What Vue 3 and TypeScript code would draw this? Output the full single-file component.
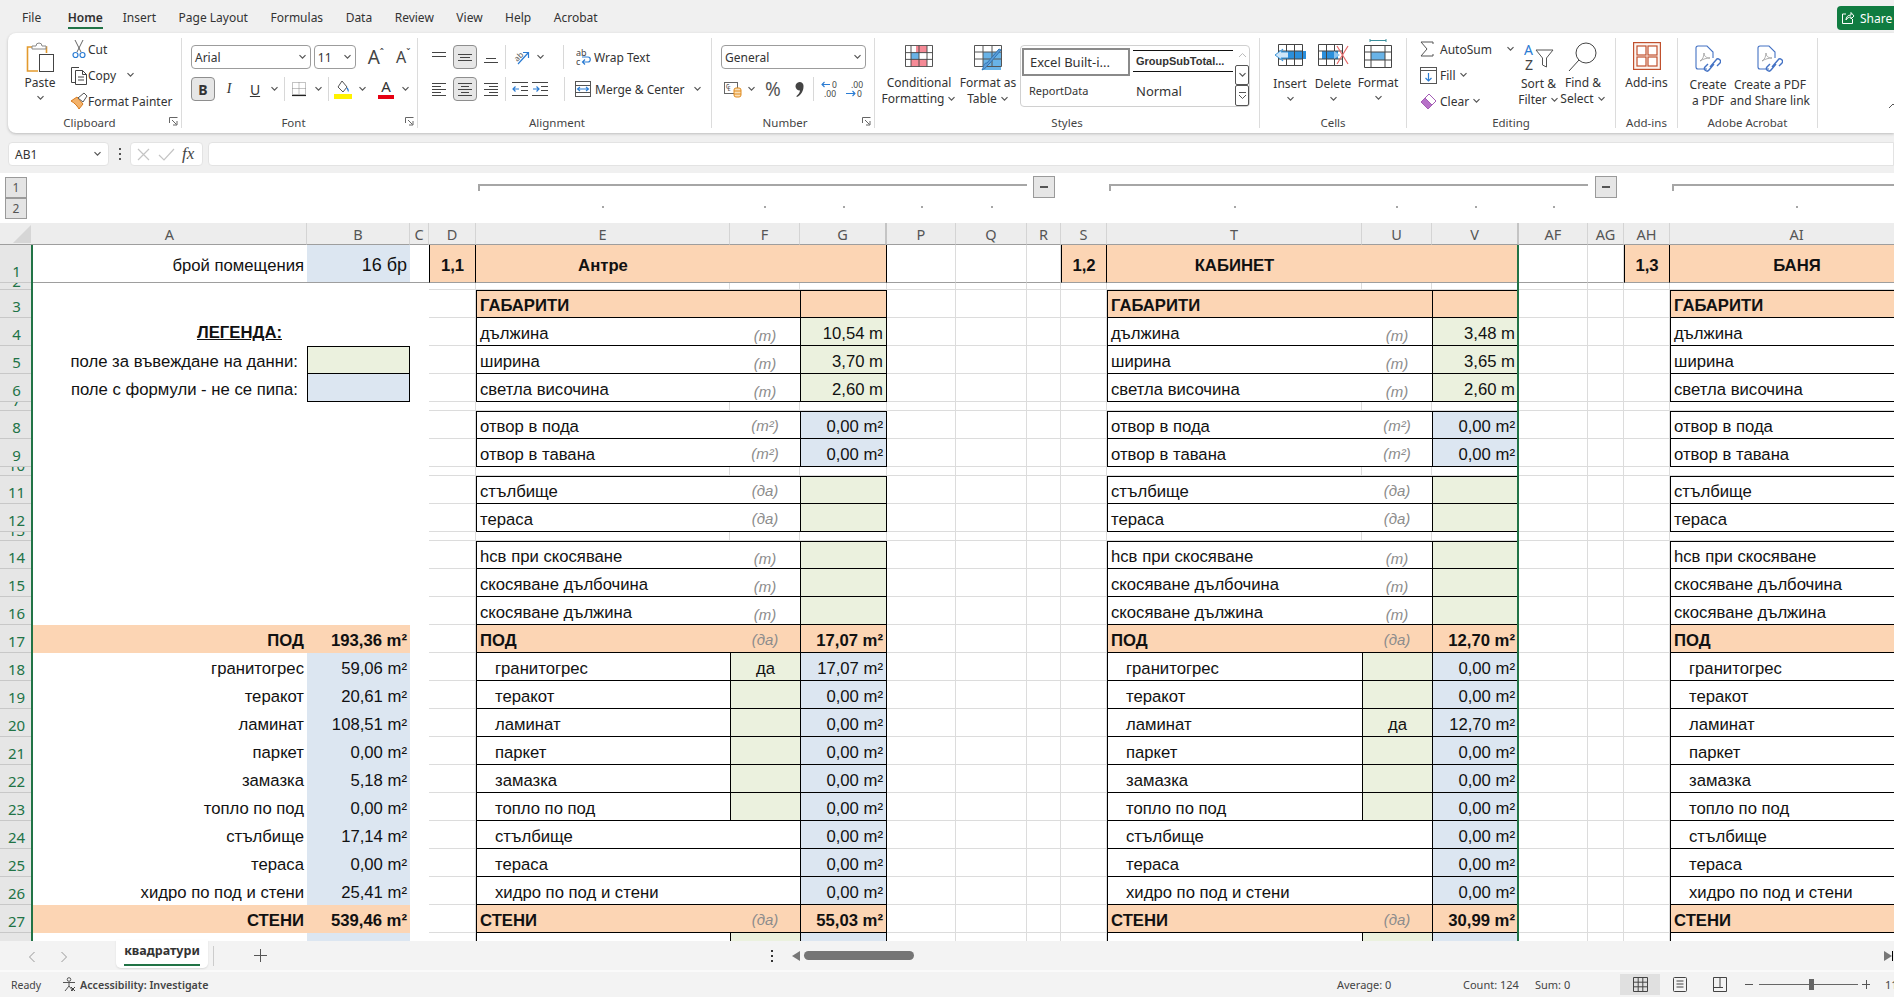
<script setup lang="ts">
import { h } from 'vue'

const Chev = () =>
  h('svg', { width: 9, height: 6, viewBox: '0 0 9 6', style: 'flex:none;display:block' }, [
    h('path', { d: 'M1.5 1.2 4.5 4.2 7.5 1.2', fill: 'none', stroke: '#555', 'stroke-width': 1.2 })
  ])

interface Cell { c: number; r: number; cls: string; t?: string; key?: string }

const colNames = ['A','B','C','D','E','F','G','P','Q','R','S','T','U','V','AF','AG','AH','AI']
const rowNos = Array.from({ length: 28 }, (_, i) => i + 1)
const tinyRows = [2, 7, 10, 13]

const A = 2, B = 3, C = 4, D = 5, E = 6, F = 7, G = 8, S = 12, T = 13, U = 14, V = 15, AH = 18, AI = 19

const cells: Cell[] = []
const used = new Set<string>()
function put(c: number, rowNo: number, cls: string, t?: string) {
  used.add(c + ':' + rowNo)
  cells.push({ c, r: rowNo + 1, cls, t })
}

/* left summary columns */
put(A, 1, 'ra fb', 'брой помещения')
put(B, 1, 'ra blue fb bigv', '16 бр')
put(C, 1, 'fb')
put(A, 4, 'ra legend', 'ЛЕГЕНДА:')
put(A, 5, 'ra legline', 'поле за въвеждане на данни:')
put(B, 5, 'green l r t b')
put(A, 6, 'ra legline', 'поле с формули - не се пипа:')
put(B, 6, 'blue l r b')

const summary: [string, string][] = [
  ['гранитогрес', '59,06 m²'], ['теракот', '20,61 m²'], ['ламинат', '108,51 m²'],
  ['паркет', '0,00 m²'], ['замазка', '5,18 m²'], ['топло по под', '0,00 m²'],
  ['стълбище', '17,14 m²'], ['тераса', '0,00 m²'], ['хидро по под и стени', '25,41 m²']
]
put(A, 17, 'ra peach bold', 'ПОД')
put(B, 17, 'ra peach bold', '193,36 m²')
summary.forEach(([a, b], i) => {
  put(A, 18 + i, 'ra', a)
  put(B, 18 + i, 'ra blue', b)
})
put(A, 27, 'ra peach bold', 'СТЕНИ')
put(B, 27, 'ra peach bold', '539,46 m²')
put(A, 28, '')
put(B, 28, 'blue')

const materials = ['гранитогрес', 'теракот', 'ламинат', 'паркет', 'замазка', 'топло по под']
const extras = ['стълбище', 'тераса', 'хидро по под и стени']

interface Block {
  d: number; e: number; f?: number; g?: number; no: string; title: string
  dims?: string[]; floor?: string; yes?: number; yesVal?: string; walls?: string
}

function block(b: Block) {
  const row = (r: number, label: string, lcls: string, unit: string, ucls: string, val: string, vcls: string) => {
    put(b.e, r, 'l ' + lcls, label)
    if (b.f && b.g) {
      put(b.f, r, 'ca ' + ucls, unit)
      put(b.g, r, 'ra l r ' + vcls, val)
    }
  }
  put(b.d, 1, 'ca peach bold l r fb', b.no)
  put(b.e, 1, 'ca peach bold fb', b.title)
  if (b.f && b.g) {
    put(b.f, 1, 'peach fb')
    put(b.g, 1, 'peach fb r')
  }
  const d = b.dims ?? ['', '', '']
  row(3, 'ГАБАРИТИ', 'peach bold t b', '', 'peach t b', '', 'peach t b')
  row(4, 'дължина', 'b', '(m)', 'unit low b', d[0], 'green b')
  row(5, 'ширина', 'b', '(m)', 'unit low b', d[1], 'green b')
  row(6, 'светла височина', 'b', '(m)', 'unit low b', d[2], 'green b')
  row(8, 'отвор в пода', 't b', '(m²)', 'unit t b', '0,00 m²', 'blue t b')
  row(9, 'отвор в тавана', 'b', '(m²)', 'unit b', '0,00 m²', 'blue b')
  row(11, 'стълбище', 't b', '(да)', 'unit t b', '', 'green t b')
  row(12, 'тераса', 'b', '(да)', 'unit b', '', 'green b')
  row(14, 'hсв при скосяване', 't b', '(m)', 'unit low t b', '', 'green t b')
  row(15, 'скосяване дълбочина', 'b', '(m)', 'unit low b', '', 'green b')
  row(16, 'скосяване дължина', 'b', '(m)', 'unit low b', '', 'green b')
  row(17, 'ПОД', 'peach bold b', '(да)', 'unit peach b', b.floor ?? '', 'peach bold b')
  materials.forEach((m, i) => {
    const on = b.yes === i
    row(18 + i, m, 'ind b', on ? 'да' : '', 'green l b', on ? (b.yesVal ?? '') : '0,00 m²', 'blue b')
  })
  extras.forEach((m, i) => row(24 + i, m, 'ind b', '', 'b', '0,00 m²', 'blue b'))
  row(27, 'СТЕНИ', 'peach bold b', '(да)', 'unit peach b', b.walls ?? '', 'peach bold b')
  row(28, '', '', '', 'green l', '', 'blue')
}

block({ d: D, e: E, f: F, g: G, no: '1,1', title: 'Антре', dims: ['10,54 m', '3,70 m', '2,60 m'], floor: '17,07 m²', yes: 0, yesVal: '17,07 m²', walls: '55,03 m²' })
block({ d: S, e: T, f: U, g: V, no: '1,2', title: 'КАБИНЕТ', dims: ['3,48 m', '3,65 m', '2,60 m'], floor: '12,70 m²', yes: 2, yesVal: '12,70 m²', walls: '30,99 m²' })
block({ d: AH, e: AI, no: '1,3', title: 'БАНЯ' })

/* remaining sheet cells only show gridlines */
for (let c = D; c <= AI; c++) {
  for (let r = 1; r <= 28; r++) {
    if (!used.has(c + ':' + r)) {
      cells.push({ c, r: r + 1, cls: r === 1 ? 'gridv fb' : 'grid' })
    }
  }
}
cells.forEach((x, i) => (x.key = 'k' + i))

const brackets = [
  { from: 6, to: 11, btn: 11 },
  { from: 13, to: 17, btn: 17 }
]
const dots = [6, 7, 8, 9, 10, 13, 14, 15, 16, 19]
</script>

<template>
  <div class="app">
    <!-- tabs -->
    <div class="tabs">
      <span class="tab">File</span>
      <span class="tab on">Home</span>
      <span class="tab">Insert</span>
      <span class="tab">Page Layout</span>
      <span class="tab">Formulas</span>
      <span class="tab">Data</span>
      <span class="tab">Review</span>
      <span class="tab">View</span>
      <span class="tab">Help</span>
      <span class="tab">Acrobat</span>
      <button class="share">
        <svg width="14" height="14" viewBox="0 0 14 14" fill="none" stroke="#fff" stroke-width="1"><path d="M5 3H1.5v9.5h10V8M5 9c0-3 2-5 5-5V1.5l3 3.5-3 3V6C8 6 6 7 5 9z"/></svg>
        Share
      </button>
    </div>

    <!-- ribbon -->
    <div class="ribbon">
      <section class="group g-clip">
        <div class="gbody">
          <div class="paste">
            <svg width="28" height="30" viewBox="0 0 28 30" fill="none"><path d="M8 5H1.5v24H12" stroke="#e39a2d" stroke-width="1.6"/><path d="M19 5h1.5v6" stroke="#e39a2d" stroke-width="1.6"/><path d="M6 7V4h4a3 3 0 0 1 6 0h4v3z" fill="#fff" stroke="#888"/><rect x="13.5" y="12.5" width="14" height="17" fill="#fff" stroke="#444"/></svg>
            <span class="paste-t">Paste</span>
            <Chev />
          </div>
          <div class="cliprows">
            <div class="mini"><span class="mi"><svg width="14" height="20" viewBox="0 0 14 20" fill="none"><path d="M3 1l6 12M11 1 5 13" stroke="#666"/><circle cx="3.5" cy="16" r="2.5" stroke="#2b7cd3" stroke-width="1.2"/><circle cx="10.5" cy="16" r="2.5" stroke="#2b7cd3" stroke-width="1.2"/></svg></span>Cut</div>
            <div class="mini"><span class="mi"><svg width="18" height="19" viewBox="0 0 18 19" fill="none" stroke="#444"><path d="M5 16.5H1.5V1.5H9"/><path d="M5.5 4.5h7l4 4v10h-11zM12.5 4.5v4h4M8 11h6M8 14h6"/></svg></span>Copy<span class="chev-gap"><Chev /></span></div>
            <div class="mini"><span class="mi"><svg width="18" height="18" viewBox="0 0 18 18" fill="none"><path d="M1 9l6-4 6 7-4 5c-1-2-4-6-8-8z" fill="#f3b26b" stroke="#d87a1c"/><path d="M8 6l6-5 3 3-4 6z" stroke="#555" fill="#fff"/></svg></span>Format Painter</div>
          </div>
        </div>
        <div class="glabel lb-clip">Clipboard<svg class="launch" width="9" height="9" viewBox="0 0 9 9" fill="none" stroke="#666"><path d="M.5 6V.5H8.500M3 3l4.500 4.500M4 8h4V4"/></svg></div>
      </section>

      <section class="group g-font">
        <div class="gbody two">
          <div class="rrow">
            <div class="combo w122"><span>Arial</span><Chev /></div>
            <div class="combo w43 ml3"><span>11</span><Chev /></div>
            <span class="big-a ml6">A<sup>ˆ</sup></span>
            <span class="small-a">A<sup>ˇ</sup></span>
          </div>
          <div class="rrow">
            <span class="tbtn active w24 bold-b">B</span>
            <span class="tbtn w24 ml2 it">I</span>
            <span class="tbtn w24 ml2 und">U</span>
            <span class="ch12"><Chev /></span>
            <i class="vsep ml4"></i>
            <span class="tbtn w24 ml2"><svg width="16" height="16" viewBox="0 0 16 16" fill="none"><path d="M1.500 1.500h13v12h-13zM8 1.500v12M1.500 7.500h13" stroke="#888" stroke-dasharray="1 1"/><path d="M1 14.500h14" stroke="#222" stroke-width="1.200"/></svg></span>
            <span class="ch12"><Chev /></span>
            <i class="vsep ml4"></i>
            <span class="tbtn w24 ml2"><svg width="18" height="19" viewBox="0 0 18 19" fill="none"><path d="M8 1l5 6-4 5-5-5z" stroke="#555"/><path d="M13 8c1 1.500 2 2.500 1 3.500" stroke="#2b7cd3" stroke-width="1.400"/><rect x="0" y="14" width="18" height="5" fill="#fff200"/></svg></span>
            <span class="ch12"><Chev /></span>
            <span class="tbtn w24 ml6 colr">A<i></i></span>
            <span class="ch12"><Chev /></span>
          </div>
        </div>
        <div class="glabel lb-font">Font<svg class="launch" width="9" height="9" viewBox="0 0 9 9" fill="none" stroke="#666"><path d="M.5 6V.5H8.500M3 3l4.500 4.500M4 8h4V4"/></svg></div>
      </section>

      <section class="group g-align">
        <div class="gbody two">
          <div class="rrow">
            <span class="tbtn w24"><svg width="14" height="14" viewBox="0 0 14 14" stroke="#444"><path d="M0 2.500h14M0 6.500h14"/></svg></span>
            <span class="tbtn w24 ml2 active"><svg width="14" height="14" viewBox="0 0 14 14" stroke="#444"><path d="M0 4.500h14M2 7.500h10M0 10.500h14"/></svg></span>
            <span class="tbtn w24 ml2"><svg width="14" height="14" viewBox="0 0 14 14" stroke="#444"><path d="M2 8.500h10M0 12.500h14"/></svg></span>
            <i class="vsep ml2"></i>
            <span class="tbtn w24 ml3"><svg width="18" height="18" viewBox="0 0 18 18" fill="none"><text x="2" y="12" font-size="8" fill="#555" transform="rotate(-45 6 9)" font-family="Noto Sans">ab</text><path d="M6 16 16 5M11 4.500h5.500V10" stroke="#2b7cd3" stroke-width="1.200"/></svg></span>
            <span class="ch12"><Chev /></span>
            <i class="vsep ml17"></i>
            <span class="wrapico w18 ml12"><svg width="16" height="18" viewBox="0 0 16 18" fill="none"><text x="0" y="8" font-size="9" fill="#444" font-family="Noto Sans">ab</text><text x="0" y="17" font-size="9" fill="#444" font-family="Noto Sans">c</text><path d="M7 14h5c3 0 3-5 0-5H6M9 11.500 6.500 14 9 16.500" stroke="#2b7cd3" stroke-width="1.200"/></svg></span>
            <span class="rtext">Wrap Text</span>
          </div>
          <div class="rrow">
            <span class="tbtn w24"><svg width="14" height="14" viewBox="0 0 14 14" stroke="#444"><path d="M0 1.500h14M0 4.500h9M0 7.500h14M0 10.500h9M0 13.500h14"/></svg></span>
            <span class="tbtn w24 ml2 active"><svg width="14" height="14" viewBox="0 0 14 14" stroke="#444"><path d="M0 1.500h14M3 4.500h8M0 7.500h14M3 10.500h8M0 13.500h14"/></svg></span>
            <span class="tbtn w24 ml2"><svg width="14" height="14" viewBox="0 0 14 14" stroke="#444"><path d="M0 1.500h14M5 4.500h9M0 7.500h14M5 10.500h9M0 13.500h14"/></svg></span>
            <i class="vsep ml2"></i>
            <span class="ico16 ml6"><svg width="16" height="14" viewBox="0 0 16 14" fill="none"><path d="M0 .5h16M9 4.500h7M9 8.500h7M0 13.500h16" stroke="#444"/><path d="M7 7H1M3.500 4.500 1 7l2.500 2.500" stroke="#2b7cd3" stroke-width="1.200"/></svg></span>
            <span class="ico16 ml4"><svg width="16" height="14" viewBox="0 0 16 14" fill="none"><path d="M0 .5h16M9 4.500h7M9 8.500h7M0 13.500h16" stroke="#444"/><path d="M1 7h6M4.500 4.500 7 7 4.500 9.500" stroke="#2b7cd3" stroke-width="1.200"/></svg></span>
            <i class="vsep ml16"></i>
            <span class="wrapico w20 ml10"><svg width="16" height="18" viewBox="0 0 16 18" fill="none"><rect x=".5" y="1.500" width="15" height="15" stroke="#555"/><path d="M.5 5.500h15M.5 12.500h15" stroke="#555"/><path d="M2.500 9h11M5 7 2.500 9 5 11M11 7l2.500 2L11 11" stroke="#2b7cd3" stroke-width="1.100"/></svg></span>
            <span class="rtext">Merge &amp; Center</span>
            <span class="ml8"><Chev /></span>
          </div>
        </div>
        <div class="glabel lb-align">Alignment</div>
      </section>

      <section class="group g-num">
        <div class="gbody two">
          <div class="rrow"><div class="combo w145"><span>General</span><Chev /></div></div>
          <div class="rrow">
            <span class="ico20 ml3"><svg width="18" height="17" viewBox="0 0 18 17" fill="none"><rect x=".5" y="1.500" width="13" height="11" stroke="#666"/><text x="2" y="10" font-size="8" fill="#555" font-family="Noto Sans">₠</text><rect x="10" y="7" width="7" height="9" rx="2" fill="#fbe0b8" stroke="#e08b1e"/><path d="M10 10h7M10 13h7" stroke="#e08b1e"/></svg></span>
            <span class="ch12"><Chev /></span>
            <span class="pct">%</span>
            <span class="cma"><svg width="9" height="15" viewBox="0 0 9 15"><path d="M4.500 0a4 4 0 0 1 4 4.500C8.500 9 6 13 2 15l-.7-.8C3.500 12.500 4.800 10.500 5 8.500A4 4 0 1 1 4.500 0z" fill="#444"/></svg></span>
            <i class="vsep ml2"></i>
            <span class="dec ml6"><svg width="24" height="20" viewBox="0 0 24 20" fill="none"><path d="M10 5.500H2M4.500 3 2 5.500 4.500 8" stroke="#2b7cd3" stroke-width="1.100"/><text x="12" y="9" font-size="8.500" fill="#444" font-family="Noto Sans">0</text><text x="4" y="18" font-size="8.500" fill="#444" font-family="Noto Sans">.00</text></svg></span>
            <span class="dec"><svg width="24" height="20" viewBox="0 0 24 20" fill="none"><text x="7" y="9" font-size="8.500" fill="#444" font-family="Noto Sans">.00</text><path d="M2 14.500h9M8.500 12 11 14.500 8.500 17" stroke="#2b7cd3" stroke-width="1.100"/><text x="13" y="18" font-size="8.500" fill="#444" font-family="Noto Sans">0</text></svg></span>
          </div>
        </div>
        <div class="glabel lb-num">Number<svg class="launch" width="9" height="9" viewBox="0 0 9 9" fill="none" stroke="#666"><path d="M.5 6V.5H8.500M3 3l4.500 4.500M4 8h4V4"/></svg></div>
      </section>

      <section class="group g-styles">
        <div class="gbody">
          <div class="bigbtn w82 up4">
            <svg width="28" height="22" viewBox="0 0 28 26" preserveAspectRatio="none" fill="none"><rect x="11" y="1" width="11" height="8" fill="#f58a96"/><rect x="6" y="9" width="8" height="8" fill="#69b3e7"/><rect x="6" y="17" width="16" height="8" fill="#f58a96"/><path d="M.5.5h27v25H.5zM.5 9h27M.5 17h27M6 .5v25M14 .5v25M22 .5v25" stroke="#444"/></svg>
            <span class="bt t7">Conditional</span><span class="bt">Formatting <Chev class="inl" /></span>
          </div>
          <div class="bigbtn w56 up4">
            <svg width="28" height="26" viewBox="0 0 28 26" fill="none"><rect x="9" y="7" width="18" height="18" fill="#69b3e7"/><path d="M.5.5h27v21H.5zM.5 7h27M.5 14h27M9 .5v21M18 .5v21" stroke="#555"/><path d="M27 5 16 18l-3 3c-1 2-3 3-5 4 2-3 1-7 5-7l12-14z" fill="#5d9bd5" stroke="#2f75b5"/></svg>
            <span class="bt t8">Format as</span><span class="bt">Table <Chev class="inl" /></span>
          </div>
          <div class="gallery">
            <div class="gal-grid">
              <div class="gal sel">Excel Built-i...</div>
              <div class="gal sub">GroupSubTotal...</div>
              <div class="gal rep">ReportData</div>
              <div class="gal nor">Normal</div>
            </div>
            <div class="gal-scroll">
              <span class="sc dis"><svg width="9" height="6" viewBox="0 0 9 6" fill="none" stroke="#bbb"><path d="M1 5l3.500-3.500L8 5"/></svg></span>
              <span class="sc bd"><Chev /></span>
              <span class="sc bd"><svg width="9" height="9" viewBox="0 0 9 9" fill="none" stroke="#555"><path d="M1 1.500h7M1 4l3.500 3.500L8 4"/></svg></span>
            </div>
          </div>
        </div>
        <div class="glabel">Styles</div>
      </section>

      <section class="group g-cells">
        <div class="gbody">
          <div class="bigbtn w44">
            <svg width="32" height="22" viewBox="0 0 32 22" fill="none"><rect x="8" y="7" width="24" height="8" fill="#2b8fdc"/><path d="M4.500.5h24v21h-24zM4.500 7h24M4.500 15h24M12.500.5v21M20.500.5v21" stroke="#444"/><path d="M14 8H7l2-3-8 6 8 6-2-3h7" fill="#cfe6f8" stroke="#3c95d8"/></svg>
            <span class="bt t1">Insert</span><Chev class="cb" />
          </div>
          <div class="bigbtn w42">
            <svg width="32" height="22" viewBox="0 0 32 22" fill="none"><rect x="5" y="7" width="16" height="8" fill="#2b8fdc"/><path d="M1.500.5h24v21h-24zM1.500 7h24M1.500 15h24M9.500.5v21M17.500.5v21" stroke="#444"/><path d="M17 7l6 4-6 4z" fill="#8fc3ec"/><path d="M20 2l11 18M31 2 20 20" stroke="#e66a6a" stroke-width="1.200"/></svg>
            <span class="bt t1">Delete</span><Chev class="cb" />
          </div>
          <div class="bigbtn w48 up">
            <svg width="28" height="29" viewBox="0 0 28 29" fill="none"><path d="M6 1.500h16M6 0v3M22 0v3" stroke="#3a8f9c"/><rect x="7" y="13" width="14" height="8" fill="#69b3e7"/><path d="M.5 6.500h27v22H.5zM.5 13h27M.5 21h27M7 6.500v22M21 6.500v22" stroke="#444"/></svg>
            <span class="bt t2">Format</span><Chev class="cb" />
          </div>
        </div>
        <div class="glabel">Cells</div>
      </section>

      <section class="group g-edit">
        <div class="gbody">
          <div class="editrows">
            <div class="mini m2"><span class="mi2"><svg width="14" height="16" viewBox="0 0 14 16" fill="none" stroke="#555"><path d="M13 3V1H1l6 7-6 7h12v-2"/></svg></span>AutoSum<span class="chev-gap2"><Chev /></span></div>
            <div class="mini m2"><span class="mi2"><svg width="17" height="17" viewBox="0 0 17 17" fill="none"><rect x=".5" y=".5" width="16" height="16" stroke="#555"/><path d="M.5 3.500h16" stroke="#555"/><path d="M8.500 6v8M5.500 11l3 3 3-3" stroke="#2b7cd3" stroke-width="1.200"/></svg></span>Fill<span class="ml3"><Chev /></span></div>
            <div class="mini m2"><span class="mi2"><svg width="17" height="17" viewBox="0 0 17 17"><path d="M1 9l8-8 7 7-8 8z" fill="#fff" stroke="#a45db5"/><path d="M1 9l4-4 7 7-4 4z" fill="#b772c8" stroke="#a45db5"/></svg></span>Clear<span class="ml3"><Chev /></span></div>
          </div>
          <div class="bigbtn w43 up2">
            <svg width="30" height="28" viewBox="0 0 30 28" fill="none"><text x="0" y="12" font-size="14" fill="#2b7cd3" font-family="Noto Sans">A</text><text x="1" y="27" font-size="14" fill="#444" font-family="Noto Sans">Z</text><path d="M12 7h17l-6.500 8v9l-4-2v-7z" stroke="#555"/></svg>
            <span class="bt t3">Sort &amp;</span><span class="bt">Filter <Chev class="inl" /></span>
          </div>
          <div class="bigbtn w46 up3">
            <svg width="30" height="30" viewBox="0 0 30 30" fill="none" stroke="#444"><circle cx="18" cy="11" r="10"/><path d="M11 18 1 29"/></svg>
            <span class="bt t4">Find &amp;</span><span class="bt">Select <Chev class="inl" /></span>
          </div>
        </div>
        <div class="glabel">Editing</div>
      </section>

      <section class="group g-add">
        <div class="gbody">
          <div class="bigbtn wfull up3">
            <svg width="28" height="28" viewBox="0 0 28 28" fill="none" stroke="#c0502d" stroke-width="1.200"><rect x=".6" y=".6" width="26.800" height="26.800" fill="#fdf6f2"/><rect x="4" y="4" width="9" height="9" fill="#fff"/><rect x="15" y="4" width="9" height="9" fill="#fff"/><rect x="4" y="15" width="9" height="9" fill="#fff"/><rect x="15" y="15" width="9" height="9" fill="#fff"/></svg>
            <span class="bt t5">Add-ins</span>
          </div>
        </div>
        <div class="glabel">Add-ins</div>
      </section>

      <section class="group g-acro">
        <div class="gbody">
          <div class="bigbtn w60 up4">
            <svg width="26" height="27" viewBox="0 0 26 27" fill="none"><path d="M12 24H3a2 2 0 0 1-2-2V3a2 2 0 0 1 2-2h9l6 6v6" stroke="#4472c4" stroke-width="1.100"/><path d="M5 16c3-1 4-6 4-8 0 3 2 5 6 5-3 0-7 1-10 3z" stroke="#999" stroke-width=".8"/><path d="M15 22l6-7a2.500 2.500 0 0 1 4 3l-3 3M19 19l-5 6a2.500 2.500 0 0 1-4-3l3-3" stroke="#4472c4" stroke-width="1.400"/></svg>
            <span class="bt t6">Create</span><span class="bt">a PDF</span>
          </div>
          <div class="bigbtn w64 up4">
            <svg width="26" height="27" viewBox="0 0 26 27" fill="none"><path d="M12 24H3a2 2 0 0 1-2-2V3a2 2 0 0 1 2-2h9l6 6v6" stroke="#4472c4" stroke-width="1.100"/><path d="M5 16c3-1 4-6 4-8 0 3 2 5 6 5-3 0-7 1-10 3z" stroke="#999" stroke-width=".8"/><path d="M15 22l6-7a2.500 2.500 0 0 1 4 3l-3 3M19 19l-5 6a2.500 2.500 0 0 1-4-3l3-3" stroke="#4472c4" stroke-width="1.400"/></svg>
            <span class="bt t6">Create a PDF</span><span class="bt">and Share link</span>
          </div>
        </div>
        <div class="glabel">Adobe Acrobat</div>
      </section>
      <div class="collapse"><svg width="10" height="6" viewBox="0 0 10 6" fill="none" stroke="#555"><path d="M1 5l4-4 4 4"/></svg></div>
    </div>

    <!-- formula bar -->
    <div class="fbar">
      <div class="namebox"><span>AB1</span><Chev /></div>
      <div class="fdots"><i></i><i></i><i></i></div>
      <div class="fxbox">
        <svg width="15" height="15" viewBox="0 0 15 15" fill="none" stroke="#c4c4c4" stroke-width="1.200"><path d="M2 2l11 11M13 2 2 13"/></svg>
        <svg width="17" height="15" viewBox="0 0 17 15" fill="none" stroke="#c4c4c4" stroke-width="1.200"><path d="M1 8l5 5L16 2"/></svg>
        <span class="fx">fx</span>
      </div>
      <div class="finput"></div>
    </div>

    <!-- outline gutter -->
    <div class="outline cols">
      <div class="levels"><span class="lvl">1</span><span class="lvl">2</span></div>
      <template v-for="b in brackets" :key="b.from">
        <div class="bracket" :style="{ gridColumn: b.from + ' / ' + b.to }"></div>
        <div class="ominus" :style="{ gridColumn: b.btn }"><span><i></i></span></div>
      </template>
      <div class="bracket" :style="{ gridColumn: 19 }"></div>
      <div v-for="d in dots" :key="d" class="odot" :style="{ gridColumn: d }"></div>
    </div>

    <!-- sheet -->
    <div class="sheet cols">
      <div class="corner"><svg width="18" height="18" viewBox="0 0 18 18"><path d="M18 0v18H0z" fill="#d6d6d6"/></svg></div>
      <div v-for="(n, i) in colNames" :key="n" class="chead" :class="{ dbl: n === 'G' || n === 'V' }" :style="{ gridColumn: i + 2, gridRow: 1 }">{{ n }}</div>
      <div v-for="n in rowNos" :key="n" class="rhead" :class="{ tiny: tinyRows.includes(n) }" :style="{ gridRow: n + 1 }"><span>{{ n }}</span></div>
      <div v-for="x in cells" :key="x.key" class="cell" :class="x.cls" :style="{ gridColumn: x.c, gridRow: x.r }">{{ x.t }}</div>
      <div class="selbar left"></div>
      <div class="selbar right"></div>
    </div>

    <!-- sheet tabs -->
    <div class="tabbar">
      <span class="nav"><svg width="8" height="12" viewBox="0 0 8 12" fill="none" stroke="#999"><path d="M6.500 1 1.500 6l5 5"/></svg></span>
      <span class="nav n2"><svg width="8" height="12" viewBox="0 0 8 12" fill="none" stroke="#999"><path d="M1.500 1l5 5-5 5"/></svg></span>
      <div class="sheettab"><span>квадратури</span></div>
      <i class="tabsep"></i>
      <span class="plus"><svg width="13" height="13" viewBox="0 0 13 13" stroke="#555"><path d="M6.500 0v13M0 6.500h13"/></svg></span>
      <div class="vdots"><i></i><i></i><i></i></div>
      <svg class="harrow" width="8" height="10" viewBox="0 0 8 10"><path d="M8 0v10L0 5z" fill="#777"/></svg>
      <div class="thumb"></div>
      <svg class="harrow r" width="8" height="10" viewBox="0 0 8 10"><path d="M0 0v10l8-5z" fill="#777"/></svg>
    </div>

    <!-- status bar -->
    <div class="status">
      <span class="st-ready">Ready</span>
      <span class="acc">
        <svg width="14" height="15" viewBox="0 0 14 15" fill="none" stroke="#555"><circle cx="7" cy="2.500" r="1.800"/><path d="M1 5.500h12M7 5.500V9M3 14l4-5 4 5"/><path d="M9 10l4 4M13 10l-4 4" stroke="#444"/></svg>
        <b>Accessibility: Investigate</b>
      </span>
      <span class="st-avg">Average: 0</span>
      <span class="st-cnt">Count: 124</span>
      <span class="st-sum">Sum: 0</span>
      <span class="view on"><svg width="15" height="15" viewBox="0 0 15 15" fill="none" stroke="#444"><path d="M.5.500h14v14H.5zM.5 5.200h14M.5 9.800h14M5.200.5v14M9.800.5v14"/></svg></span>
      <span class="view"><svg width="14" height="15" viewBox="0 0 14 15" fill="none" stroke="#444"><rect x=".5" y=".5" width="13" height="14" rx="1"/><path d="M3.500 4h7M3.500 7h7M3.500 10h7"/></svg></span>
      <span class="view"><svg width="14" height="15" viewBox="0 0 14 15" fill="none" stroke="#444"><path d="M.5.500h13v14H.5zM.5 10.500h6.500V.5M7 10.500h3"/></svg></span>
      <span class="zm minus"></span>
      <div class="slider"><i></i></div>
      <span class="zm plusz"></span>
      <span class="zoomv">115%</span>
    </div>
  </div>
</template>

<style scoped>
.app { width: 1894px; height: 997px; overflow: hidden; display: flex; flex-direction: column; background: #f0f0f0; font-family: "Noto Sans", "Open Sans", sans-serif; font-size: 12px; color: #333; }

/* tabs */
.tabs { height: 33px; flex: none; display: flex; align-items: flex-start; padding-left: 22px; box-sizing: border-box; }
.tab { margin-right: 22.500px; height: 29px; line-height: 36px; font-size: 12px; color: #333; box-sizing: border-box; }
.tab.on { font-weight: 600; color: #2f2f2f; border-bottom: 2px solid #217346; margin-left: 4px; margin-right: 20px; line-height: 35px; }
.share { margin: 6px 0 0 auto; width: 57px; height: 24px; border: 0; border-radius: 4px 0 0 4px; background: #107c41; color: #fff; display: flex; align-items: center; gap: 5px; padding: 0 0 0 4px; font: inherit; font-size: 12px; }

/* ribbon */
.ribbon { flex: none; height: 100px; margin-left: 8px; display: flex; background: #fff; border-radius: 8px 0 0 8px; box-shadow: 0 1px 3px rgba(0, 0, 0, .22); position: relative; }
.group { flex: none; margin-top: 5px; height: 90px; border-right: 1px solid #dcdcdc; box-sizing: border-box; display: flex; flex-direction: column; }
.gbody { height: 77px; display: flex; flex: none; }
.gbody.two { flex-direction: column; gap: 8px; padding-top: 7px; box-sizing: border-box; }
.glabel { position: relative; text-align: center; height: 13px; line-height: 15px; font-size: 11.500px; color: #444; }
.lb-clip { padding-right: 10px; }
.lb-font { padding-right: 12px; }
.lb-align { padding-right: 15px; }
.lb-num { padding-right: 16px; }
.launch { position: absolute; right: 3px; top: 2px; }
.g-clip { width: 174px; }
.g-font { width: 236px; }
.g-align { width: 294px; }
.g-num { width: 163px; }
.g-styles { width: 385px; }
.g-cells { width: 147px; }
.g-edit { width: 209px; }
.g-add { width: 62px; }
.g-acro { width: 140px; }

.g-font .gbody, .g-num .gbody { padding-left: 9px; }
.g-align .gbody { padding-left: 9px; }
.rrow { display: flex; align-items: center; height: 24px; }
.combo { height: 24px; box-sizing: border-box; border: 1px solid #9c9c9c; border-radius: 4px; display: flex; align-items: center; justify-content: space-between; padding: 0 3px; font-size: 12px; color: #333; }
.w122 { width: 122px; } .w43 { width: 43px; } .w145 { width: 145px; }
.ml2 { margin-left: 2px; } .ml3 { margin-left: 3px; } .ml4 { margin-left: 4px; } .ml6 { margin-left: 6px; } .ml8 { margin-left: 8px; } .ml10 { margin-left: 10px; } .ml12 { margin-left: 12px; } .ml16 { margin-left: 16px; } .ml17 { margin-left: 17px; }
.big-a { font-size: 19px; width: 28px; text-align: center; color: #444; line-height: 22px; }
.small-a { font-size: 16px; width: 28px; text-align: center; color: #444; line-height: 22px; }
.big-a sup, .small-a sup { font-size: 10px; line-height: 0; }
.tbtn { display: flex; align-items: center; justify-content: center; height: 24px; box-sizing: border-box; font-size: 14px; flex: none; }
.w24 { width: 24px; }
.active { background: #e6e6e6; border: 1px solid #8e8e8e; border-radius: 4px; }
.bold-b { font-weight: 700; }
.it { font-style: italic; font-family: "Liberation Serif", serif; }
.und { text-decoration: underline; }
.ch12 { width: 12px; flex: none; display: flex; justify-content: center; margin-left: 1px; }
.vsep { width: 1px; height: 24px; background: #d8d8d8; flex: none; display: block; }
.colr { position: relative; font-size: 15px; align-items: flex-start; line-height: 18px; }
.colr i { position: absolute; left: 4px; right: 4px; bottom: 2px; height: 4px; background: #e60012; }
.wrapico { display: flex; flex: none; }
.w18 { width: 18px; } .w20 { width: 20px; }
.rtext { font-size: 12px; white-space: nowrap; }
.ico16 { width: 16px; flex: none; display: flex; }
.ico20 { width: 20px; flex: none; display: flex; }
.pct { width: 24px; margin-left: 4px; font-size: 19px; line-height: 24px; text-align: center; color: #555; }
.cma { width: 24px; margin-left: 2px; display: flex; justify-content: center; }
.dec { width: 24px; flex: none; display: flex; }

.paste { width: 60px; margin-left: 2px; padding-top: 4px; display: flex; flex-direction: column; align-items: center; box-sizing: border-box; }
.paste-t { margin-top: 3px; margin-bottom: 4px; line-height: 16px; }
.cliprows, .editrows { display: grid; grid-auto-rows: 26px; margin-top: -2px; }
.editrows { width: 110px; padding-left: 13px; box-sizing: border-box; flex: none; }
.mini { display: flex; align-items: center; white-space: nowrap; }
.mi { width: 18px; display: flex; justify-content: center; }
.mi2 { width: 20px; display: flex; justify-content: flex-start; }
.chev-gap { margin-left: 10px; }
.chev-gap2 { margin-left: 14px; }

.bigbtn { flex: none; display: flex; flex-direction: column; align-items: center; padding-top: 6px; box-sizing: border-box; }
.w82 { width: 82px; margin-left: 3px; } .w56 { width: 56px; } .w44 { width: 44px; margin-left: 8px; } .w42 { width: 42px; } .w48 { width: 48px; } .w46 { width: 46px; } .wfull { width: 100%; } .w60 { width: 60px; } .w64 { width: 64px; }
.bigbtn svg { flex: none; }
.bt { line-height: 16px; white-space: nowrap; display: flex; align-items: center; gap: 3px; }
.bigbtn > svg + .bt { margin-top: 6px; }
.bigbtn > svg + .bt.t1 { margin-top: 10px; }
.bigbtn > svg + .bt.t2 { margin-top: 7px; }
.bigbtn > svg + .bt.t3 { margin-top: 5px; }
.bigbtn > svg + .bt.t4 { margin-top: 3px; }
.bigbtn > svg + .bt.t5 { margin-top: 5px; }
.bigbtn > svg + .bt.t6 { margin-top: 5px; }
.bigbtn > svg + .bt.t7 { margin-top: 8px; }
.bigbtn > svg + .bt.t8 { margin-top: 4px; }
.up { padding-top: 1px; }
.up2 { padding-top: 5px; }
.up3 { padding-top: 4px; }
.up4 { padding-top: 7px; }
.cb { margin-top: 4px; }
.gallery { width: 230px; height: 62px; margin: 7px 0 0 4px; border: 1px solid #d0d0d0; border-radius: 4px; box-sizing: border-box; display: flex; flex: none; }
.gal-grid { width: 214px; display: grid; grid-template-columns: 108px 106px; grid-template-rows: 28px 29px; padding: 2px 0 0 1px; box-sizing: border-box; flex: none; }
.gal { display: flex; align-items: center; white-space: nowrap; }
.sel { border: 2px solid #8a8a8a; box-sizing: border-box; padding-left: 6px; font-size: 13px; height: 28px; }
.sub { font-family: "Liberation Sans", sans-serif; font-weight: 700; font-size: 11px; border-top: 1px solid #111; border-bottom: 1px solid #111; height: 22px; margin: 2px 0 0 3px; width: 100px; padding-left: 3px; box-sizing: border-box; }
.rep { padding-left: 7px; font-size: 11px; }
.nor { padding-left: 6px; font-size: 13px; }
.gal-scroll { flex: 1; display: flex; flex-direction: column; }
.sc { flex: 1; display: flex; align-items: center; justify-content: center; box-sizing: border-box; }
.sc.bd { border: 1px solid #555; border-radius: 2px; }
.collapse { position: absolute; right: -4px; bottom: 20px; width: 10px; }

/* formula bar */
.fbar { flex: none; height: 40px; display: flex; align-items: flex-start; padding: 9px 0 0 8px; box-sizing: border-box; }
.namebox { width: 101px; height: 24px; background: #fff; border: 1px solid #e3e3e3; border-radius: 4px; box-sizing: border-box; display: flex; align-items: center; justify-content: space-between; padding: 0 6px; font-size: 12px; }
.fdots { width: 21px; height: 24px; display: flex; flex-direction: column; align-items: center; justify-content: center; gap: 3px; }
.fdots i { width: 2px; height: 2px; background: #555; display: block; }
.fxbox { width: 73px; height: 24px; background: #fff; border: 1px solid #e3e3e3; border-radius: 4px; box-sizing: border-box; display: flex; align-items: center; gap: 7px; padding-left: 5px; }
.fx { font-family: "Liberation Serif", serif; font-style: italic; font-size: 17px; color: #444; }
.finput { flex: 1; height: 24px; margin-left: 5px; background: #fff; border: 1px solid #e3e3e3; border-radius: 4px 0 0 4px; box-sizing: border-box; }

/* shared column template */
.cols { grid-template-columns: 33px 274px 103px 19px 47px 254px 70px 87px 69px 71px 34px 46px 255px 70px 87px 69px 36px 46px 254px; }

.outline { flex: none; height: 50px; display: grid; grid-template-rows: 25px 25px; background: #fff; overflow: hidden; }
.levels { grid-column: 1; grid-row: 1 / 3; display: flex; flex-direction: column; padding: 4px 0 0 5px; }
.lvl { width: 22px; height: 21px; background: #e4e4e4; border: 1px solid #9a9a9a; box-sizing: border-box; font-size: 12px; color: #555; display: flex; align-items: center; justify-content: center; }
.bracket { grid-row: 1; height: 7px; margin-top: 11px; margin-left: 2px; border-top: 2px solid #a6a6a6; border-left: 2px solid #a6a6a6; box-sizing: border-box; }
.ominus { grid-row: 1; display: flex; justify-content: center; padding-top: 3px; }
.ominus span { width: 22px; height: 22px; background: #e6e6e6; border: 1px solid #9a9a9a; box-sizing: border-box; display: flex; align-items: center; justify-content: center; }
.ominus i { width: 8px; height: 2px; background: #555; display: block; }
.odot { grid-row: 2; justify-self: center; width: 2px; height: 2px; background: #a6a6a6; margin-top: 8px; }

.sheet { flex: none; height: 718px; display: grid; grid-template-rows: 22px 38px 7px 28px 28px 28px 28px 9px 28px 28px 9px 28px 28px 9px repeat(15, 28px); background: #fff; overflow: hidden; position: relative; font-family: "Liberation Sans", Arial, sans-serif; font-size: 16.700px; color: #111; }
.corner { grid-column: 1; grid-row: 1; background: #ededed; display: flex; align-items: flex-end; justify-content: flex-end; padding: 0 2px 1px 0; box-sizing: border-box; border-bottom: 1px solid #9e9e9e; }
.chead { background: #ededed; border-right: 1px solid #d4d4d4; border-bottom: 1px solid #9e9e9e; box-sizing: border-box; display: flex; align-items: center; justify-content: center; font-family: "Noto Sans", sans-serif; font-size: 14.500px; color: #555; }
.chead.dbl { border-right: 2px solid #c4c4c4; }
.rhead { grid-column: 1; background: #e6e6e6; border-bottom: 1px solid #c8c8c8; box-sizing: border-box; display: flex; align-items: flex-end; justify-content: center; font-family: "Noto Sans", sans-serif; font-size: 15px; color: #217346; overflow: hidden; padding-bottom: 1px; }
.rhead.tiny { align-items: flex-start; padding: 0; }
.rhead.tiny span { margin-top: -12px; }
.cell { display: flex; align-items: center; white-space: nowrap; overflow: hidden; box-sizing: border-box; padding: 4px 3px 0; min-width: 0; min-height: 0; }
.grid { border-right: 1px solid #dcdcdc; border-bottom: 1px solid #dcdcdc; padding: 0; }
.gridv { border-right: 1px solid #dcdcdc; padding: 0; }
.ra { justify-content: flex-end; text-align: right; }
.ca { justify-content: center; text-align: center; padding: 4px 0 0; }
.fb { border-bottom: 1px solid #9e9e9e; padding-top: 5px; }
.bigv { font-size: 18px; padding-top: 3px; }
.blue { background: #dce6f1; }
.green { background: #ebf1de; }
.peach { background: #fcd5b4; }
.bold { font-weight: 700; }
.l { border-left: 1px solid #000; }
.r { border-right: 1px solid #000; }
.t { border-top: 1px solid #000; padding-top: 3px; }
.b { border-bottom: 1px solid #000; }
.ind { padding-left: 18px; }
.unit { color: #8c8c8c; font-style: italic; font-weight: 400; font-size: 15px; padding-top: 1px; }
.low { align-items: flex-end; padding-bottom: 1px; }
.legend { font-weight: 700; text-decoration: underline; padding-right: 25px; padding-top: 2px; }
.legline { padding-right: 9px; }
.selbar { grid-row: 2 / 30; width: 2px; background: #217346; z-index: 2; }
.selbar.left { grid-column: 1; justify-self: end; }
.selbar.right { grid-column: 15; justify-self: end; }

/* sheet tabs */
.tabbar { flex: none; height: 31px; display: flex; align-items: center; position: relative; background: #f3f3f3; border-bottom: 2px solid #fafafa; box-sizing: border-box; }
.nav { position: absolute; left: 28px; top: 9px; }
.nav.n2 { left: 60px; }
.sheettab { margin-left: 116px; width: 92px; height: 28px; margin-top: -3px; background: #fff; border-radius: 0 0 5px 5px; display: flex; justify-content: center; box-shadow: 0 1px 2px rgba(0, 0, 0, .1); }
.sheettab span { font-weight: 700; font-size: 12.500px; color: #333; height: 24px; line-height: 22px; border-bottom: 2px solid #217346; }
.tabsep { width: 1px; height: 20px; margin-left: 5px; background: #ccc; }
.plus { margin-left: 40px; display: flex; }
.vdots { margin-left: 504px; display: flex; flex-direction: column; gap: 3px; }
.vdots i { width: 2px; height: 2px; background: #333; display: block; }
.harrow { margin-left: 19px; }
.harrow.r { margin-left: auto; margin-right: 1px; }
.thumb { width: 110px; height: 9px; margin-left: 4px; background: #757575; border-radius: 5px; }

/* status */
.status { flex: none; height: 25px; display: flex; align-items: center; font-size: 11px; color: #444; position: relative; background: #f3f3f3; }
.st-ready { margin-left: 11px; width: 51px; font-size: 10.500px; flex: none; }
.acc { display: flex; align-items: center; gap: 4px; width: 1275px; font-size: 10.700px; flex: none; }
.acc b { font-weight: 600; }
.st-avg { width: 126px; flex: none; }
.st-cnt { width: 72px; flex: none; }
.st-sum { width: 85px; flex: none; }
.view { width: 40px; height: 21px; display: flex; align-items: center; justify-content: center; flex: none; }
.view.on { background: #e0e0e0; }
.zm { width: 8px; height: 1px; background: #555; margin-left: 4px; position: relative; display: block; flex: none; }
.minus { margin-left: 5px; }
.plusz::after { content: ""; position: absolute; left: 3.500px; top: -4px; width: 1px; height: 9px; background: #555; }
.slider { width: 99px; height: 1px; background: #666; margin-left: 6px; position: relative; flex: none; }
.slider i { position: absolute; left: 50px; top: -5px; width: 5px; height: 11px; background: #666; }
.zoomv { margin-left: 15px; white-space: nowrap; font-size: 11px; flex: none; }
</style>

<style>
html, body { margin: 0; padding: 0; overflow: hidden; background: #f0f0f0; }
</style>
